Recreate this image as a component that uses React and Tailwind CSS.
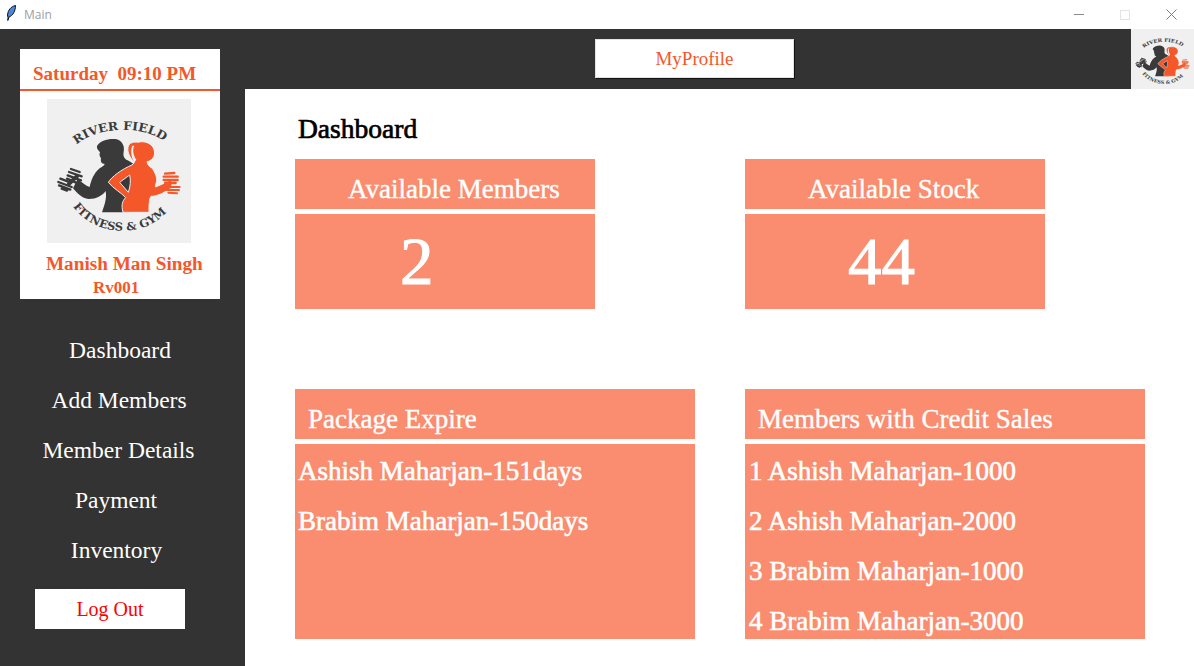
const navItems = [
  { label: "Dashboard", cls: "w-[240px]" },
  { label: "Add Members", cls: "w-[238px]" },
  { label: "Member Details", cls: "w-[237px]" },
  { label: "Payment", cls: "w-[232px]" },
  { label: "Inventory", cls: "w-[233px]" },
];

const expiring = ["Ashish Maharjan-151days", "Brabim Maharjan-150days"];
const credits = [
  "1 Ashish Maharjan-1000",
  "2 Ashish Maharjan-2000",
  "3 Brabim Maharjan-1000",
  "4 Brabim Maharjan-3000",
];

function Logo({ id, className }) {
  return (
    <svg viewBox="0 0 432 432" preserveAspectRatio="none" className={className}>
      <rect width="432" height="432" fill="#f0f0f0" />
      <defs>
        <path id={`${id}-top`} d="M88 137 C 150 84, 285 74, 356 130" />
        <path id={`${id}-bot`} d="M78 322 C 140 412, 290 422, 362 336" />
      </defs>
      <text fill="#3a3a3a" fontSize="35" fontWeight="700" fontFamily="'DejaVu Serif', serif">
        <textPath href={`#${id}-top`} textLength="280" lengthAdjust="spacingAndGlyphs">RIVER FIELD</textPath>
      </text>
      <text fill="#3a3a3a" fontSize="33" fontWeight="700" fontFamily="'DejaVu Serif', serif">
        <textPath href={`#${id}-bot`} textLength="320" lengthAdjust="spacingAndGlyphs">FITNESS &amp; GYM</textPath>
      </text>

      {/* man */}
      <path
        fill="#3a3a3a"
        d="M150 141 C158 124 185 118 205 120 C224 123 234 140 230 158 C228 170 230 178 242 184 L262 196 L262 340 L165 340 C172 318 180 300 176 276 C166 290 148 300 125 300 C104 298 90 282 78 268 L92 240 C105 250 116 260 128 264 C132 246 140 222 158 208 C170 200 174 198 172 194 C164 196 160 188 162 178 C158 172 156 168 159 160 C154 154 148 148 150 141 Z"
      />
      {/* left dumbbell */}
      <g stroke="#3a3a3a" strokeLinecap="round" fill="none">
        <path strokeWidth="12" d="M66 254 L90 232" />
        <path strokeWidth="7" d="M72 210 L98 219 M66 219 L104 232 M62 229 L102 244 M60 239 L92 253" />
        <path strokeWidth="7" d="M40 239 L72 251 M34 249 L74 264 M36 259 L70 272 M44 269 L60 275" />
      </g>
      {/* woman */}
      <path
        fill="#f4572a"
        stroke="#f0f0f0"
        strokeWidth="3"
        d="M262 190 C250 178 240 160 243 145 C246 130 262 128 272 130 C290 124 318 132 322 155 C326 175 312 186 300 188 C302 198 308 204 316 208 C324 222 332 235 328 250 C326 258 324 260 326 264 L362 248 L368 270 C350 282 330 292 312 292 C306 300 306 320 306 340 L228 340 C222 320 226 305 236 296 C222 280 200 270 184 250 C192 235 225 210 255 198 Z M248 228 L218 250 L244 280 C250 262 252 245 248 228 Z"
      />
      <path fill="#f0f0f0" d="M262 140 C256 150 258 168 268 182 L262 190 C252 175 250 155 256 140 Z" />
      {/* right dumbbell */}
      <g stroke="#f4572a" strokeLinecap="round" fill="none">
        <path strokeWidth="10" d="M368 250 L368 264" />
        <path strokeWidth="7" d="M354 224 L382 222 M350 233 L392 233 M350 243 L392 243 M354 252 L386 252" />
        <path strokeWidth="6" d="M360 264 L398 264 M360 273 L396 273 M364 281 L390 283" />
      </g>
    </svg>
  );
}

function Card({ title, headCls, bodyCls, children, wide }) {
  return (
    <div className={wide ? "w-[400px]" : "w-[300px]"}>
      <div className={`h-[50px] pt-[10px] bg-[#fa8c6f] flex items-center text-white text-[27px] [-webkit-text-stroke:0.4px_white] ${headCls}`}>{title}</div>
      <div className={`mt-[5px] bg-[#fa8c6f] text-white overflow-hidden ${bodyCls}`}>{children}</div>
    </div>
  );
}

export default function App() {
  return (
    <div className="w-[1194px] h-[666px] flex flex-col overflow-hidden bg-white font-['Liberation_Serif',serif]">
      {/* title bar */}
      <div className="h-[29px] shrink-0 flex items-center bg-white">
        <svg viewBox="0 0 16 16" className="w-[16px] h-[16px] ml-[3px] mb-[3px]">
          <path d="M12.5 0.5 C8 1.5 5 5 4.5 10 L5 12.5 L4.8 15.5 L6 12 C10 10.5 12.5 6 12.5 0.5 Z" fill="#4a86e0" stroke="#111111" strokeWidth="1" />
        </svg>
        <span className="ml-[5px] text-[12px] text-[#9aa0a6] font-['Open_Sans',sans-serif]">Main</span>
        <div className="ml-auto flex items-center">
          <div className="w-[46px] h-[29px] flex items-center justify-center">
            <div className="w-[10px] h-px bg-[#8a8a8a]" />
          </div>
          <div className="w-[46px] h-[29px] flex items-center justify-center">
            <div className="w-[10px] h-[10px] border border-[#e4e4e4]" />
          </div>
          <div className="w-[46px] h-[29px] flex items-center justify-center">
            <svg viewBox="0 0 11 11" className="w-[11px] h-[11px]">
              <path d="M0.5 0.5 L10.5 10.5 M10.5 0.5 L0.5 10.5" stroke="#7a7a7a" strokeWidth="1" />
            </svg>
          </div>
        </div>
      </div>

      <div className="flex flex-1 min-h-0">
        {/* sidebar */}
        <aside className="w-[245px] shrink-0 bg-[#333333] pt-[20px]">
          <div className="ml-[20px] w-[200px] h-[250px] bg-white flex flex-col text-[#f4572a]">
            <div className="h-[42px] shrink-0 border-b-2 border-[#f4572a] pl-[13px] pt-[13px] text-[19px] leading-[24px] font-bold whitespace-pre">
              Saturday  09:10 PM
            </div>
            <Logo id="side" className="w-[144px] h-[144px] shrink-0 ml-[27px] mt-[8px]" />
            <div className="pl-[26px] mt-[9px] text-[19.2px] leading-[24px] font-bold">Manish Man Singh</div>
            <div className="pl-[73px] pt-[1px] text-[17px] leading-[22px] font-bold">Rv001</div>
          </div>

          <nav className="mt-[27px] flex flex-col text-white text-[23.5px]">
            {navItems.map((item) => (
              <div key={item.label} className={`h-[50px] flex items-center justify-center ${item.cls}`}>
                {item.label}
              </div>
            ))}
          </nav>

          <button className="ml-[35px] mt-[13px] w-[150px] h-[40px] bg-white text-[#ff0000] text-[20px] flex items-center justify-center">
            Log Out
          </button>
        </aside>

        <main className="flex-1 min-w-0 flex flex-col">
          {/* top bar */}
          <div className="h-[60px] shrink-0 flex bg-[#333333]">
            <div className="flex-1 pt-[10px] pl-[350px]">
              <button className="w-[199px] h-[39px] pt-[2px] bg-white border border-[#e3e3e3] shadow-[1px_1px_0_#111111] text-[#f4572a] text-[19px] flex items-center justify-center">
                MyProfile
              </button>
            </div>
            <Logo id="top" className="w-[63px] h-[60px]" />
          </div>

          <div className="pl-[50px]">
            <h1 className="h-[70px] pl-[3px] pt-[24px] text-[27.5px] leading-[32px] font-normal text-black [-webkit-text-stroke:0.7px_black]">Dashboard</h1>

            <div className="flex gap-[150px]">
              <Card title="Available Members" headCls="pl-[53px]" bodyCls="h-[95px] flex items-center pl-[105px] text-[67px] [-webkit-text-stroke:1px_white]">
                2
              </Card>
              <Card title="Available Stock" headCls="pl-[63px]" bodyCls="h-[95px] flex items-center pl-[103px] text-[67px] [-webkit-text-stroke:1px_white]">
                44
              </Card>
            </div>

            <div className="flex gap-[50px] mt-[80px]">
              <Card wide title="Package Expire" headCls="pl-[13px]" bodyCls="h-[195px] pl-[3px] pt-[2px] text-[27px] [-webkit-text-stroke:0.6px_white]">
                {expiring.map((row) => (
                  <div key={row} className="h-[50px] flex items-center">{row}</div>
                ))}
              </Card>
              <Card wide title="Members with Credit Sales" headCls="pl-[13px]" bodyCls="h-[195px] pl-[4px] pt-[2px] text-[27px] [-webkit-text-stroke:0.6px_white]">
                {credits.map((row) => (
                  <div key={row} className="h-[50px] flex items-center">{row}</div>
                ))}
              </Card>
            </div>
          </div>
        </main>
      </div>
    </div>
  );
}
